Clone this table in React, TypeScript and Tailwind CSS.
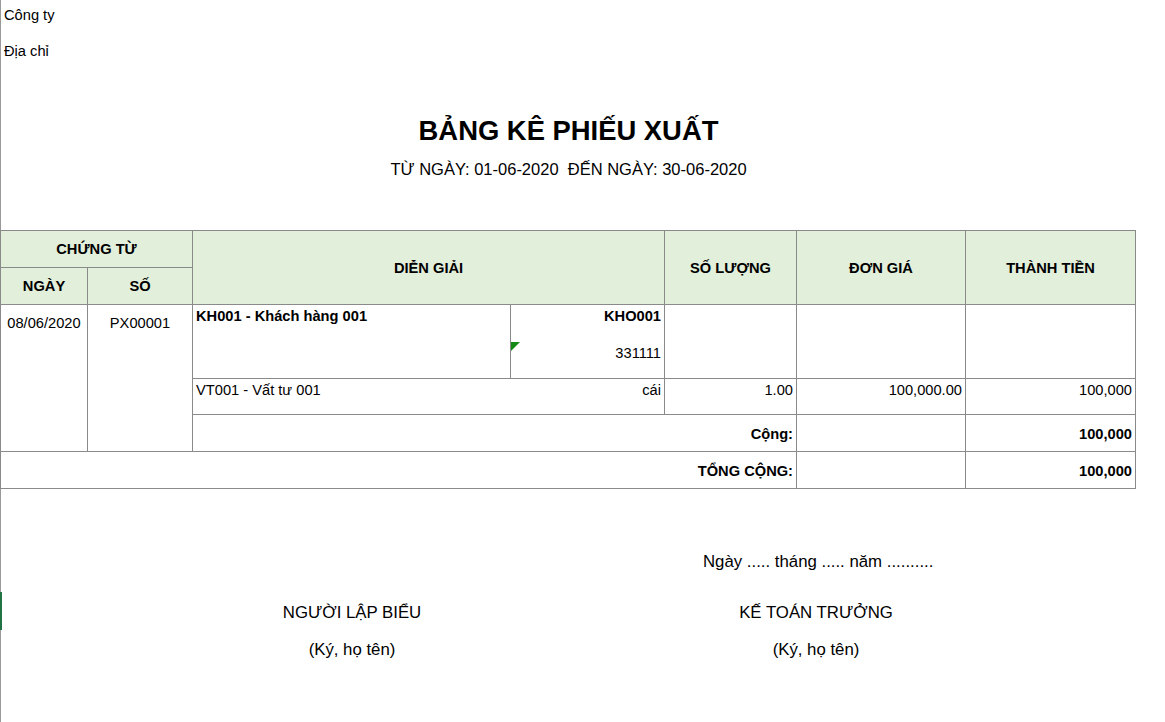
import React from "react";

const B = "border border-[#8a8a8a]";

export default function App() {
  return (
    <div
      className="relative min-h-[722px] w-full bg-white text-black border-l border-[#9a9a9a]"
      style={{ fontFamily: '"Liberation Sans", Arial, sans-serif' }}
    >
      <div className="absolute left-[-1px] top-[592px] h-[38px] w-[2px] bg-[#217346]" />
      <div className="w-[1135px]">
        <div className="pt-[7px] pl-[3px] text-[14.67px] leading-[16px]">Công ty</div>
        <div className="mt-[20px] pl-[3px] text-[14.67px] leading-[16px]">Địa chỉ</div>
        <div className="mt-[57px] text-center text-[27.4px] font-bold leading-[30px]">
          BẢNG KÊ PHIẾU XUẤT
        </div>
        <div className="mt-[13px] whitespace-pre text-center text-[16.5px] leading-[20px]">
          {"TỪ NGÀY: 01-06-2020  ĐẾN NGÀY: 30-06-2020"}
        </div>

        <table className="-ml-[1px] mt-[51px] w-[1135px] table-fixed border-collapse text-[14.67px] leading-[16px]">
          <colgroup>
            <col className="w-[87px]" />
            <col className="w-[105px]" />
            <col className="w-[318px]" />
            <col className="w-[154px]" />
            <col className="w-[132px]" />
            <col className="w-[169px]" />
            <col className="w-[170px]" />
          </colgroup>
          <tbody>
            <tr className="h-[37px] bg-[#e2efda] font-bold">
              <td colSpan={2} className={`${B} text-center align-middle`}>CHỨNG TỪ</td>
              <td colSpan={2} rowSpan={2} className={`${B} text-center align-middle`}>DIỄN GIẢI</td>
              <td rowSpan={2} className={`${B} text-center align-middle`}>SỐ LƯỢNG</td>
              <td rowSpan={2} className={`${B} text-center align-middle`}>ĐƠN GIÁ</td>
              <td rowSpan={2} className={`${B} text-center align-middle`}>THÀNH TIỀN</td>
            </tr>
            <tr className="h-[37px] bg-[#e2efda] font-bold">
              <td className={`${B} text-center align-middle`}>NGÀY</td>
              <td className={`${B} text-center align-middle`}>SỐ</td>
            </tr>
            <tr className="h-[37px]">
              <td rowSpan={4} className={`${B} pt-[10px] text-center align-top`}>08/06/2020</td>
              <td rowSpan={4} className={`${B} pt-[10px] text-center align-top`}>PX00001</td>
              <td rowSpan={2} className={`${B} px-[3px] pt-[3px] align-top font-bold`}>
                KH001 - Khách hàng 001
              </td>
              <td className={`${B} border-b-0 px-[3px] pt-[3px] text-right align-top font-bold`}>
                KHO001
              </td>
              <td rowSpan={2} className={B}></td>
              <td rowSpan={2} className={B}></td>
              <td rowSpan={2} className={B}></td>
            </tr>
            <tr className="h-[37px]">
              <td className={`${B} relative border-t-0 px-[3px] pt-[3px] text-right align-top`}>
                <svg className="absolute left-0 top-0" width="9" height="9" viewBox="0 0 9 9">
                  <polygon points="0,0 9,0 0,9" fill="#138a13" />
                </svg>
                331111
              </td>
            </tr>
            <tr className="h-[36px]">
              <td colSpan={2} className={`${B} px-[3px] pt-[3px] align-top`}>
                <div className="flex justify-between">
                  <span>VT001 - Vất tư 001</span>
                  <span>cái</span>
                </div>
              </td>
              <td className={`${B} px-[3px] pt-[3px] text-right align-top`}>1.00</td>
              <td className={`${B} px-[3px] pt-[3px] text-right align-top`}>100,000.00</td>
              <td className={`${B} px-[3px] pt-[3px] text-right align-top`}>100,000</td>
            </tr>
            <tr className="h-[37px]">
              <td colSpan={3} className={`${B} px-[3px] pt-[1px] text-right align-middle font-bold`}>
                Cộng:
              </td>
              <td className={B}></td>
              <td className={`${B} px-[3px] pt-[1px] text-right align-middle font-bold`}>100,000</td>
            </tr>
            <tr className="h-[37px]">
              <td colSpan={5} className={`${B} px-[3px] pt-[1px] text-right align-middle font-bold`}>
                TỔNG CỘNG:
              </td>
              <td className={B}></td>
              <td className={`${B} px-[3px] pt-[1px] text-right align-middle font-bold`}>100,000</td>
            </tr>
          </tbody>
        </table>

        <div className="flex text-[16.8px] leading-[16px]">
          <div className="w-[702px]" />
          <div className="mt-[65px] w-[226px] whitespace-nowrap text-center">
            Ngày ..... tháng ..... năm ..........
          </div>
        </div>
        <div className="mt-[35px] flex text-[16.8px] leading-[16px]">
          <div className="w-[702px] text-center">NGƯỜI LẬP BIỂU</div>
          <div className="w-[226px] whitespace-nowrap text-center">KẾ TOÁN TRƯỞNG</div>
        </div>
        <div className="mt-[21px] flex text-[16.8px] leading-[16px]">
          <div className="w-[702px] text-center">(Ký, họ tên)</div>
          <div className="w-[226px] whitespace-nowrap text-center">(Ký, họ tên)</div>
        </div>
      </div>
    </div>
  );
}
